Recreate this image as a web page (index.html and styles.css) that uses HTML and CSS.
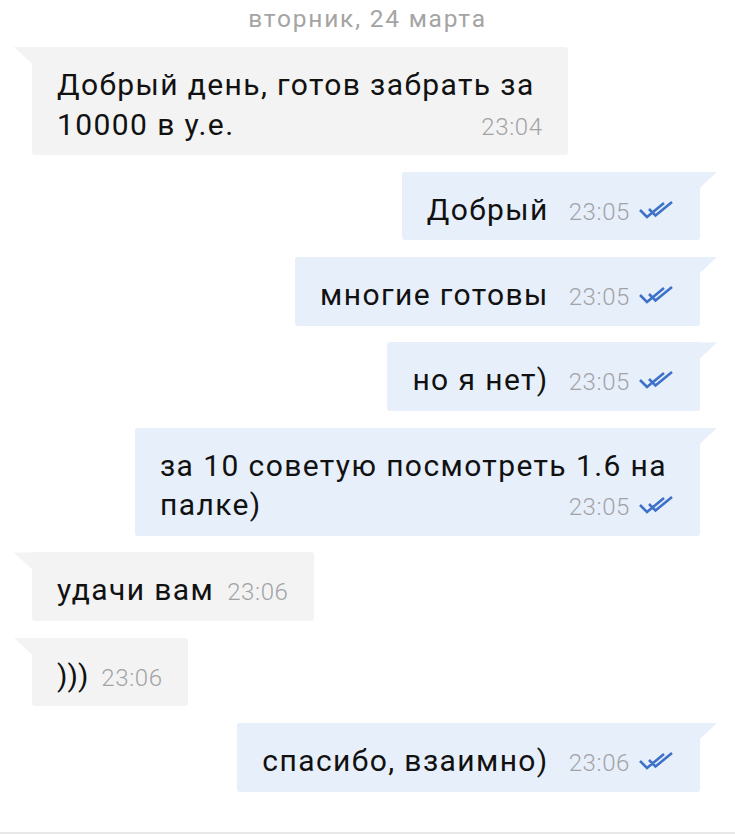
FILE: index.html
```html
<!DOCTYPE html>
<html lang="ru">
<head>
<meta charset="utf-8">
<title>Чат</title>
<link rel="stylesheet" href="styles.css">
</head>
<body>
<div class="chat">
  <div class="date">вторник, 24 марта</div>

  <div class="row in">
    <div class="bubble">
      <div class="line">Добрый день, готов забрать за</div>
      <div class="line last"><span>10000 в у.е.</span><span class="meta"><span class="time">23:04</span></span></div>
    </div>
  </div>

  <div class="row out">
    <div class="bubble">
      <div class="line last"><span>Добрый</span><span class="meta"><span class="time">23:05</span><svg class="ticks" viewBox="0 -1 36 18" width="36" height="18"><path d="M1 8 L8 15 L25 1 M10 7 L16.5 13.5 L33 0"/></svg></span></div>
    </div>
  </div>

  <div class="row out">
    <div class="bubble">
      <div class="line last"><span>многие готовы</span><span class="meta"><span class="time">23:05</span><svg class="ticks" viewBox="0 -1 36 18" width="36" height="18"><path d="M1 8 L8 15 L25 1 M10 7 L16.5 13.5 L33 0"/></svg></span></div>
    </div>
  </div>

  <div class="row out">
    <div class="bubble">
      <div class="line last"><span>но я нет)</span><span class="meta"><span class="time">23:05</span><svg class="ticks" viewBox="0 -1 36 18" width="36" height="18"><path d="M1 8 L8 15 L25 1 M10 7 L16.5 13.5 L33 0"/></svg></span></div>
    </div>
  </div>

  <div class="row out">
    <div class="bubble">
      <div class="line">за 10 советую посмотреть 1.6 на</div>
      <div class="line last"><span>палке)</span><span class="meta"><span class="time">23:05</span><svg class="ticks" viewBox="0 -1 36 18" width="36" height="18"><path d="M1 8 L8 15 L25 1 M10 7 L16.5 13.5 L33 0"/></svg></span></div>
    </div>
  </div>

  <div class="row in">
    <div class="bubble">
      <div class="line last"><span>удачи вам</span><span class="meta"><span class="time">23:06</span></span></div>
    </div>
  </div>

  <div class="row in">
    <div class="bubble">
      <div class="line last"><span class="parens">)))</span><span class="meta"><span class="time">23:06</span></span></div>
    </div>
  </div>

  <div class="row out">
    <div class="bubble">
      <div class="line last"><span>спасибо, взаимно)</span><span class="meta"><span class="time">23:06</span><svg class="ticks" viewBox="0 -1 36 18" width="36" height="18"><path d="M1 8 L8 15 L25 1 M10 7 L16.5 13.5 L33 0"/></svg></span></div>
    </div>
  </div>
</div>
<div class="composer-edge"></div>
</body>
</html>
```

FILE: styles.css
```css
html, body {
  margin: 0;
  padding: 0;
  background: #ffffff;
}

body {
  font-family: Roboto, "Noto Sans", "Liberation Sans", sans-serif;
  color: #111111;
  width: 735px;
  height: 834px;
  overflow: hidden;
  display: flex;
  flex-direction: column;
}

.chat {
  display: flex;
  flex-direction: column;
  gap: 16.8px;
  flex: 1;
}

.date {
  text-align: center;
  font-size: 24.5px;
  letter-spacing: 1.8px;
  line-height: 28px;
  color: #a4a4a4;
  padding: 5px 0 14px;
  margin-bottom: -16.8px;
}

.row {
  display: flex;
}

.row.in {
  justify-content: flex-start;
  padding-left: 32px;
}

.row.out {
  justify-content: flex-end;
  padding-right: 35px;
}

.bubble {
  position: relative;
  padding: 18px 25px 11px;
  font-size: 30px;
  letter-spacing: 1.4px;
  line-height: 39.5px;
  white-space: nowrap;
  border-radius: 3px;
}

.in .bubble {
  background: #f3f3f3;
  border-top-left-radius: 0;
}

.out .bubble {
  background: #e7effb;
  border-top-right-radius: 0;
}

.bubble::before {
  content: "";
  position: absolute;
  top: 0;
  width: 18px;
  height: 17px;
}

.in .bubble::before {
  left: -18px;
  background: #f3f3f3;
  clip-path: polygon(0 0, 100% 0, 100% 100%);
}

.out .bubble::before {
  right: -17px;
  background: #e7effb;
  clip-path: polygon(0 0, 100% 0, 0 100%);
}

.line {
  height: 39.5px;
}

.line:not(.last) {
  padding-right: 8px;
}

.line.last {
  display: flex;
  justify-content: space-between;
  align-items: baseline;
  gap: 20px;
}

.in .line.last {
  gap: 13px;
}

.parens {
  letter-spacing: 0;
}

.meta {
  display: inline-flex;
  align-items: baseline;
  gap: 9px;
  line-height: 1;
}

.time {
  font-size: 24px;
  letter-spacing: 0.6px;
  line-height: 1;
  color: #a3a3a7;
  font-weight: 300;
}

.ticks {
  position: relative;
  top: -1px;
}

.ticks path {
  fill: none;
  stroke: #3d72c8;
  stroke-width: 2.6;
  stroke-linecap: butt;
  stroke-linejoin: miter;
}

.composer-edge {
  height: 2px;
  background: #e8e8e8;
}
```
